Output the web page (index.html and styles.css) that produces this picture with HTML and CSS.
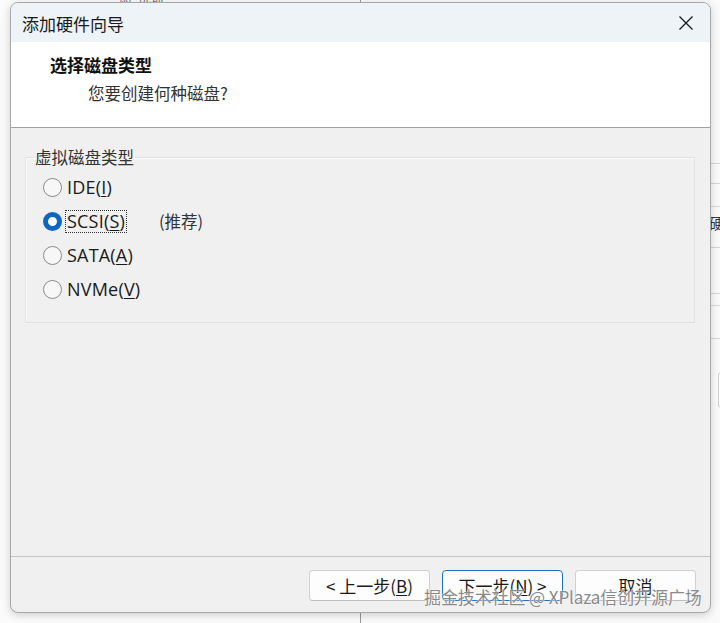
FILE: index.html
```html
<!DOCTYPE html>
<html lang="zh-CN">
<head>
<meta charset="utf-8">
<title>添加硬件向导</title>
<link rel="stylesheet" href="styles.css">
</head>
<body>
<div class="desktop">
  <div class="bg-top-text">一般&nbsp;&nbsp;选项</div>
  <div class="bg-window">
    <div class="bg-row r1"></div>
    <div class="bg-row r2"></div>
    <div class="bg-row r3"><span class="bg-glyph">硬</span></div>
    <div class="bg-row r4"></div>
    <div class="bg-row r5"></div>
    <div class="bg-row r6"></div>
    <div class="bg-box"></div>
  </div>

  <div class="dialog">
    <div class="titlebar">
      <span class="title">添加硬件向导</span>
      <button class="close" aria-label="关闭">
        <svg width="16" height="16" viewBox="0 0 16 16"><path d="M1.5 1.5 L14.5 14.5 M14.5 1.5 L1.5 14.5" stroke="#1a1a1a" stroke-width="1.3" fill="none"/></svg>
      </button>
    </div>
    <div class="header">
      <div class="h-title">选择磁盘类型</div>
      <div class="h-sub">您要创建何种磁盘?</div>
    </div>
    <div class="body">
      <fieldset class="group">
        <legend class="group-label">虚拟磁盘类型</legend>
        <div class="option">
          <span class="radio"></span>
          <span class="opt-label">IDE(<u>I</u>)</span>
        </div>
        <div class="option">
          <span class="radio checked"></span>
          <span class="opt-label focus">SCSI(<u>S</u>)</span>
          <span class="rec">(推荐)</span>
        </div>
        <div class="option">
          <span class="radio"></span>
          <span class="opt-label">SATA(<u>A</u>)</span>
        </div>
        <div class="option">
          <span class="radio"></span>
          <span class="opt-label">NVMe(<u>V</u>)</span>
        </div>
      </fieldset>
    </div>
    <div class="footer">
      <button class="btn">&lt; 上一步(<u>B</u>)</button>
      <button class="btn default">下一步(<u>N</u>) &gt;</button>
      <button class="btn">取消</button>
    </div>
  </div>

  <div class="watermark">掘金技术社区 @ XPlaza信创开源广场</div>
</div>
</body>
</html>
```

FILE: styles.css
```css
* { box-sizing: border-box; }
html, body { margin: 0; padding: 0; }
body {
  width: 720px;
  height: 623px;
  overflow: hidden;
  background: #fbfbfb;
  font-family: "Noto Sans CJK SC", "Noto Sans", sans-serif;
  color: #1a1a1a;
}
.desktop {
  position: relative;
  width: 720px;
  height: 623px;
  overflow: hidden;
}
.bg-top-text {
  position: absolute;
  left: 106px;
  top: -11px;
  font-size: 13px;
  color: #777;
}
.bg-window {
  position: absolute;
  left: 360px;
  top: 0;
  width: 380px;
  height: 640px;
  border-left: 1px solid #9a9a9a;
  background: #fafafa;
}
.bg-row {
  position: absolute;
  left: 0;
  right: 0;
  border-top: 1px solid #d6d6d6;
}
.r1 { top: 163px; }
.r2 { top: 183px; }
.r3 { top: 206px; height: 42px; border-bottom: 1px solid #d6d6d6; }
.r4 { top: 293px; }
.r5 { top: 305px; }
.r6 { top: 338px; }
.bg-glyph {
  position: absolute;
  left: 348px;
  top: 5px;
  font-size: 15px;
  color: #333;
  font-family: "Noto Sans CJK SC", serif;
}
.bg-box {
  position: absolute;
  left: 357px;
  top: 372px;
  width: 40px;
  height: 36px;
  border: 1px solid #cfcfcf;
  border-radius: 3px;
  background: #fff;
}

.dialog {
  position: absolute;
  left: 10px;
  top: 2px;
  width: 701px;
  height: 611px;
  display: flex;
  flex-direction: column;
  background: #f0f0f0;
  border: 1px solid #a8a8a8;
  border-radius: 8px;
  overflow: hidden;
  box-shadow: 0 2px 8px rgba(0,0,0,0.18);
}
.titlebar {
  height: 39px;
  flex: none;
  display: flex;
  align-items: center;
  justify-content: space-between;
  padding: 0 16px 0 11px;
  background: #edf3f6;
}
.title {
  font-size: 17px;
  line-height: 1;
  padding-top: 1px;
}
.close {
  border: 0;
  background: none;
  padding: 0;
  width: 16px;
  height: 16px;
  display: flex;
}
.header {
  height: 86px;
  flex: none;
  background: #fff;
  border-bottom: 1px solid #a0a0a0;
  padding: 12px 0 0 39px;
}
.h-title {
  font-size: 17px;
  font-weight: 700;
  line-height: 22px;
  color: #111;
}
.h-sub {
  font-size: 16.5px;
  line-height: 22px;
  margin: 6px 0 0 38px;
  color: #333;
}
.body {
  flex: 1;
  padding: 19px 15px 0 14px;
  border-bottom: 1px solid #c4c4c4;
}
.group {
  margin: 0;
  padding: 3px 0 0 17px;
  height: 176px;
  border: 1px solid #e2e2e2;
  box-shadow: inset 1px 1px 0 #fafafa;
}
.group-label {
  font-size: 16.5px;
  line-height: 20px;
  padding: 0 1px;
  margin-left: -9px;
  color: #333;
}
.option {
  display: flex;
  align-items: center;
  height: 34px;
}
.radio {
  width: 19px;
  height: 19px;
  border-radius: 50%;
  border: 1px solid #8a8a8a;
  background: #f7f7f7;
  flex: none;
  margin-right: 3px;
}
.radio.checked {
  border: 5px solid #0f66c0;
  background: #fff;
}
.opt-label {
  font-family: "Open Sans", "Noto Sans", sans-serif;
  font-size: 18px;
  line-height: 21px;
  padding: 0 1px;
  border: 1px solid transparent;
  color: #1a1a1a;
  letter-spacing: 0.2px;
}
.opt-label.focus { border: 1px dotted #333; }
.opt-label u { text-underline-offset: 2px; }
.rec {
  margin-left: 32px;
  font-size: 16.5px;
  color: #333;
}
.footer {
  height: 55px;
  flex: none;
  display: flex;
  gap: 12px;
  justify-content: flex-end;
  padding: 13px 14px 0 0;
}
.btn {
  width: 121px;
  height: 31px;
  border: 1px solid #d0d0d0;
  border-bottom-color: #bdbdbd;
  border-radius: 4px;
  background: #fdfdfd;
  font-family: "Noto Sans CJK SC", "Noto Sans", sans-serif;
  font-size: 17px;
  color: #1a1a1a;
  padding: 0;
}
.btn.default {
  border: 1.5px solid #1f6fc5;
}
.btn u { text-underline-offset: 2px; }
.watermark {
  position: absolute;
  left: 424px;
  top: 585px;
  font-size: 17px;
  line-height: 24px;
  color: #8a8a8a;
  text-shadow: 0 0 2px #fff, 0 0 1px #fff;
  letter-spacing: -0.1px;
  white-space: nowrap;
}
```
